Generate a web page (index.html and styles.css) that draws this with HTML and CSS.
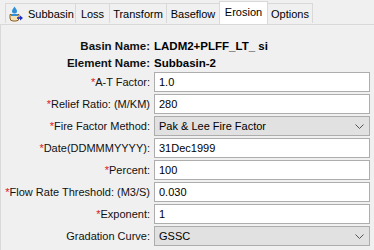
FILE: index.html
```html
<!DOCTYPE html>
<html>
<head>
<meta charset="utf-8">
<link rel="stylesheet" href="styles.css">
</head>
<body>
<div class="tabs">
  <div class="tab first">
    <svg class="ico" width="16" height="16" viewBox="0 0 16 16">
      <path d="M6.5 0.5 C5.5 2.5 4 3.5 4 5 a2.5 2.5 0 0 0 5 0 C9 3.5 7.5 2.5 6.5 0.5 Z" fill="#2f8fd8"/>
      <path d="M2 8.5 h9 v3.5 a3 3 0 0 1 -3 3 h-3 a3 3 0 0 1 -3 -3 Z" fill="#f3e2b8" stroke="#8a5a1e" stroke-width="1"/>
      <rect x="3" y="8" width="7" height="2" fill="#2f8fd8"/>
      <path d="M9 12 h4" stroke="#1a2fd0" stroke-width="1.6"/>
      <path d="M12 9.5 l3 2.5 l-3 2.5 Z" fill="#1a2fd0"/>
    </svg>
    <span>Subbasin</span>
  </div>
  <div class="tab loss">Loss</div>
  <div class="tab transform">Transform</div>
  <div class="tab baseflow">Baseflow</div>
  <div class="tab active">Erosion</div>
  <div class="tab options">Options</div>
</div>
<div class="panel">
  <div class="form">
    <div class="lbl bold">Basin Name:</div><div class="val bold">LADM2+PLFF_LT_ si</div>
    <div class="lbl bold">Element Name:</div><div class="val bold">Subbasin-2</div>
    <div class="lbl"><span class="req">*</span>A-T Factor:</div><div class="input">1.0</div>
    <div class="lbl"><span class="req">*</span>Relief Ratio: (M/KM)</div><div class="input">280</div>
    <div class="lbl"><span class="req">*</span>Fire Factor Method:</div><div class="combo"><span>Pak &amp; Lee Fire Factor</span><svg class="chev" width="9" height="5" viewBox="0 0 9 5"><path d="M0.5 0.5 L4.5 4.5 L8.5 0.5" fill="none" stroke="#555" stroke-width="1"/></svg></div>
    <div class="lbl"><span class="req">*</span>Date(DDMMMYYYY):</div><div class="input">31Dec1999</div>
    <div class="lbl"><span class="req">*</span>Percent:</div><div class="input">100</div>
    <div class="lbl"><span class="req">*</span>Flow Rate Threshold: (M3/S)</div><div class="input">0.030</div>
    <div class="lbl"><span class="req">*</span>Exponent:</div><div class="input">1</div>
    <div class="lbl">Gradation Curve:</div><div class="combo"><span>GSSC</span><svg class="chev" width="9" height="5" viewBox="0 0 9 5"><path d="M0.5 0.5 L4.5 4.5 L8.5 0.5" fill="none" stroke="#555" stroke-width="1"/></svg></div>
  </div>
</div>
</body>
</html>
```
FILE: styles.css
```css
html, body {
  margin: 0;
  padding: 0;
  background: #f0f0f0;
  width: 374px;
  height: 250px;
  overflow: hidden;
  font-family: "Liberation Sans", Arial, sans-serif;
  font-size: 11px;
  color: #000;
}
.tabs {
  display: flex;
  align-items: flex-end;
  height: 24px;
  padding-left: 5px;
  box-sizing: border-box;
}
.tab {
  height: 20px;
  box-sizing: border-box;
  border: 1px solid #d9d9d9;
  border-bottom: none;
  border-left: none;
  display: flex;
  align-items: center;
  justify-content: center;
  background: #f0f0f0;
  margin-bottom: 1px;
  font-size: 11px;
}
.tab.first {
  border-left: 1px solid #d9d9d9;
  gap: 4px;
  width: 71px;
  justify-content: flex-start;
  padding-left: 2px;
}
.tab.loss { width: 34px; }
.tab.transform { width: 57px; }
.tab.baseflow { width: 53px; }
.tab.options { width: 45px; }
.tab.active {
  background: #fff;
  height: 23px;
  width: 49px;
  margin-bottom: 0;
  margin-left: -1px;
  border-left: 1px solid #d9d9d9;
  padding-bottom: 3px;
}
.ico { display: block; }
.panel {
  border-top: 1px solid #d9d9d9;
  border-left: 1px solid #d9d9d9;
  height: 226px;
  box-sizing: border-box;
}
.form {
  display: grid;
  grid-template-columns: 149px 216px;
  column-gap: 4px;
  row-gap: 2px;
  padding-top: 13px;
}
.lbl {
  white-space: nowrap;
  display: flex;
  align-items: center;
  justify-content: flex-end;
  height: 20px;
  color: #111;
}
.bold { font-weight: bold; height: 15px; font-size: 11.5px; }
.val { display: flex; align-items: center; }
.req { color: #e0101a; }
.input, .combo {
  height: 20px;
  box-sizing: border-box;
  border: 1px solid #adadad;
  background: #fff;
  display: flex;
  align-items: center;
  padding-left: 4px;
}
.combo {
  background: #e1e1e1;
  justify-content: space-between;
  padding-right: 5px;
}
.chev { display: block; }
```
